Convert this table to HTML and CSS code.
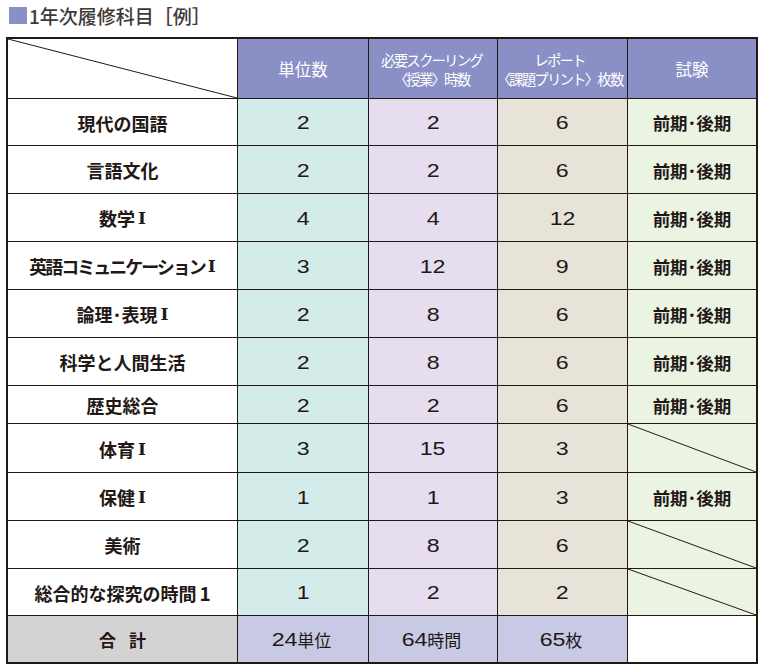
FILE: index.html
```html
<!DOCTYPE html>
<html lang="ja">
<head>
<meta charset="utf-8">
<title>1年次履修科目［例］</title>
<link rel="stylesheet" href="styles.css">
</head>
<body>
<div class="title"><span class="mark"></span><span class="title-text">1年次履修科目［例］</span></div>
<div class="grid">
  <div class="cell corner"><svg class="slash" width="100%" height="100%"><line x1="0" y1="0" x2="100%" y2="100%"/></svg></div>
  <div class="cell head">単位数</div>
  <div class="cell head two"><span>必要スクーリング</span><span>〈授業〉時数</span></div>
  <div class="cell head two wide"><span>レポート</span><span>〈課題プリント〉枚数</span></div>
  <div class="cell head">試験</div>

  <div class="cell subj">現代の国語</div>
  <div class="cell c1"><span class="num">2</span></div>
  <div class="cell c2"><span class="num">2</span></div>
  <div class="cell c3"><span class="num">6</span></div>
  <div class="cell exam">前期･後期</div>

  <div class="cell subj">言語文化</div>
  <div class="cell c1"><span class="num">2</span></div>
  <div class="cell c2"><span class="num">2</span></div>
  <div class="cell c3"><span class="num">6</span></div>
  <div class="cell exam">前期･後期</div>

  <div class="cell subj">数学<span class="roman">Ⅰ</span></div>
  <div class="cell c1"><span class="num">4</span></div>
  <div class="cell c2"><span class="num">4</span></div>
  <div class="cell c3"><span class="num">12</span></div>
  <div class="cell exam">前期･後期</div>

  <div class="cell subj tight">英語コミュニケーション<span class="roman">Ⅰ</span></div>
  <div class="cell c1"><span class="num">3</span></div>
  <div class="cell c2"><span class="num">12</span></div>
  <div class="cell c3"><span class="num">9</span></div>
  <div class="cell exam">前期･後期</div>

  <div class="cell subj">論理･表現<span class="roman">Ⅰ</span></div>
  <div class="cell c1"><span class="num">2</span></div>
  <div class="cell c2"><span class="num">8</span></div>
  <div class="cell c3"><span class="num">6</span></div>
  <div class="cell exam">前期･後期</div>

  <div class="cell subj">科学と人間生活</div>
  <div class="cell c1"><span class="num">2</span></div>
  <div class="cell c2"><span class="num">8</span></div>
  <div class="cell c3"><span class="num">6</span></div>
  <div class="cell exam">前期･後期</div>

  <div class="cell subj">歴史総合</div>
  <div class="cell c1"><span class="num">2</span></div>
  <div class="cell c2"><span class="num">2</span></div>
  <div class="cell c3"><span class="num">6</span></div>
  <div class="cell exam">前期･後期</div>

  <div class="cell subj">体育<span class="roman">Ⅰ</span></div>
  <div class="cell c1"><span class="num">3</span></div>
  <div class="cell c2"><span class="num">15</span></div>
  <div class="cell c3"><span class="num">3</span></div>
  <div class="cell exam none"><svg class="slash" width="100%" height="100%"><line x1="0" y1="0" x2="100%" y2="100%"/></svg></div>

  <div class="cell subj">保健<span class="roman">Ⅰ</span></div>
  <div class="cell c1"><span class="num">1</span></div>
  <div class="cell c2"><span class="num">1</span></div>
  <div class="cell c3"><span class="num">3</span></div>
  <div class="cell exam">前期･後期</div>

  <div class="cell subj">美術</div>
  <div class="cell c1"><span class="num">2</span></div>
  <div class="cell c2"><span class="num">8</span></div>
  <div class="cell c3"><span class="num">6</span></div>
  <div class="cell exam none"><svg class="slash" width="100%" height="100%"><line x1="0" y1="0" x2="100%" y2="100%"/></svg></div>

  <div class="cell subj">総合的な探究の時間<span class="one">1</span></div>
  <div class="cell c1"><span class="num">1</span></div>
  <div class="cell c2"><span class="num">2</span></div>
  <div class="cell c3"><span class="num">2</span></div>
  <div class="cell exam none"><svg class="slash" width="100%" height="100%"><line x1="0" y1="0" x2="100%" y2="100%"/></svg></div>

  <div class="cell total-label"><span class="spaced">合計</span></div>
  <div class="cell total"><span class="num two-digit">24</span>単位</div>
  <div class="cell total"><span class="num two-digit">64</span>時間</div>
  <div class="cell total"><span class="num two-digit">65</span>枚</div>
  <div class="cell blank"></div>
</div>
</body>
</html>
```

FILE: styles.css
```css
html, body {
  margin: 0;
  padding: 0;
  background: #ffffff;
}

body {
  font-family: "Noto Sans CJK JP", "Noto Sans", sans-serif;
  color: #231815;
}

.title {
  display: flex;
  align-items: center;
  height: 17px;
  padding: 7px 0 0 9px;
}

.mark {
  display: block;
  width: 18px;
  height: 17px;
  background: #8a8fc6;
  margin-right: 2px;
}

.title-text {
  font-size: 19px;
  line-height: 17px;
  font-weight: 500;
  color: #3e3a39;
}

.grid {
  display: grid;
  grid-template-columns: 229px 130px 128px 129px 128px;
  grid-template-rows: 59px 46px 47px 47px 47px 47px 47px 37px 48px 47px 47px 46px 46px;
  gap: 1px;
  width: 752px;
  box-sizing: border-box;
  margin: 13px 0 0 6px;
  border: 2px solid #231815;
  background: #231815;
}

.cell {
  position: relative;
  display: flex;
  align-items: center;
  justify-content: center;
  text-align: center;
  white-space: nowrap;
  background: #ffffff;
  overflow: hidden;
}

.slash {
  position: absolute;
  left: 0;
  top: 0;
  width: 100%;
  height: 100%;
}

.slash line {
  stroke: #231815;
  stroke-width: 1;
}

.head {
  background: #8a8fc6;
  color: #ffffff;
  font-size: 16.5px;
}

.head.two {
  flex-direction: column;
  font-size: 14.5px;
  line-height: 19px;
  letter-spacing: -1.9px;
  padding: 1px 3px 0 0;
}

.head.two.wide {
  padding-right: 6px;
}

.subj {
  font-size: 18px;
  font-weight: 700;
  padding-top: 1px;
}

.subj.tight {
  letter-spacing: -2px;
}

.roman {
  font-family: "DejaVu Serif", "Liberation Serif", serif;
  font-weight: 700;
  font-size: 17px;
  margin-left: 3px;
  letter-spacing: 0;
}

.one {
  font-weight: 700;
  font-size: 19px;
  margin-left: 3px;
}

.c1 { background: #d4ece9; }
.c2 { background: #e6ddef; }
.c3 { background: #e8e3d9; }

.num {
  display: inline-block;
  font-family: "Liberation Sans", Arial, sans-serif;
  font-size: 19px;
  line-height: 1;
  transform: scaleX(1.22);
  padding-top: 1px;
}

.num.two-digit {
  margin: 0 0.07em 0 0;
  position: relative;
  left: -0.05em;
}

.exam {
  background: #ebf4e3;
  font-size: 17.5px;
  font-weight: 700;
  padding-top: 1px;
}

.exam.none {
  padding-top: 0;
}

.total-label {
  background: #d3d3d3;
  font-size: 17px;
  font-weight: 700;
}

.spaced {
  letter-spacing: 13px;
  padding-left: 13px;
}

.total {
  background: #c8c9e5;
  font-size: 17px;
  padding-top: 1px;
}

.total .num {
  padding-top: 0;
}

.blank {
  background: #ffffff;
}
```
